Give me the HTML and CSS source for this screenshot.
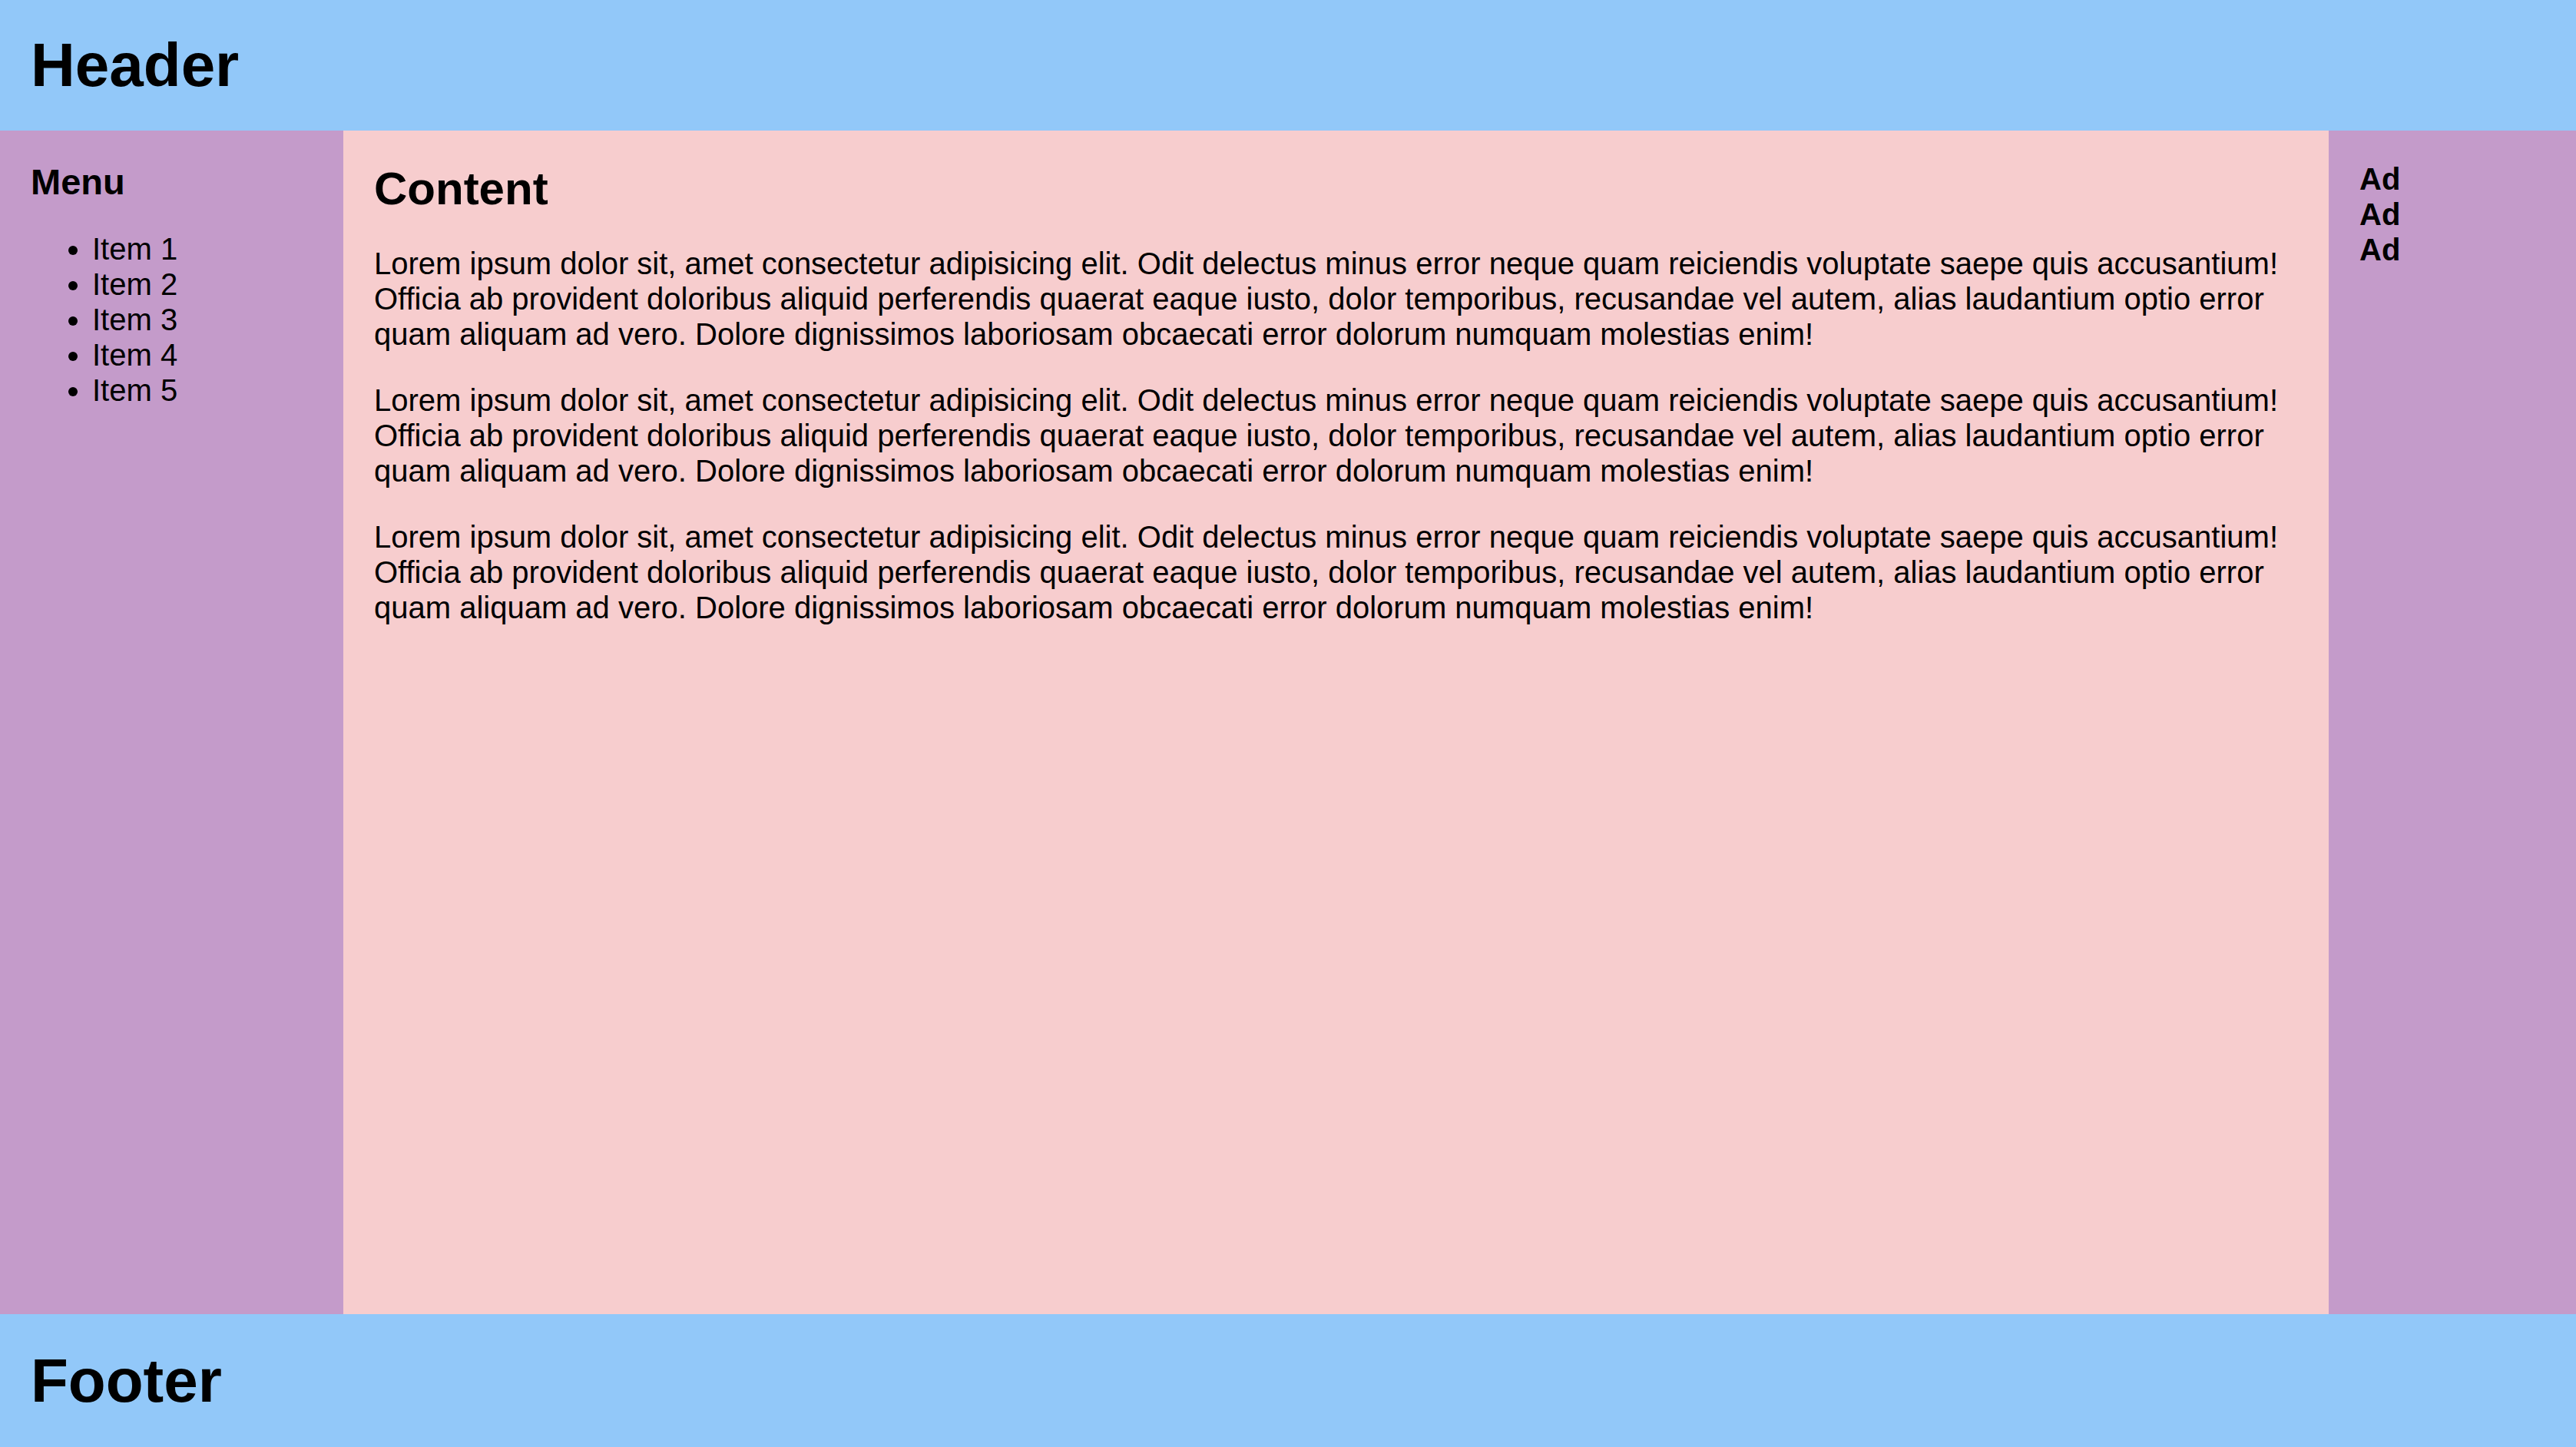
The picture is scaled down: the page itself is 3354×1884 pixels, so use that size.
FILE: index.html
```html
<!DOCTYPE html>
<html lang="en">
<head>
<meta charset="utf-8">
<title>Layout</title>
<link rel="stylesheet" href="styles.css">
</head>
<body>
<div class="page">
  <header class="header"><h1>Header</h1></header>
  <nav class="menu">
    <h3>Menu</h3>
    <ul>
      <li>Item 1</li>
      <li>Item 2</li>
      <li>Item 3</li>
      <li>Item 4</li>
      <li>Item 5</li>
    </ul>
  </nav>
  <main class="content">
    <h2>Content</h2>
    <p>Lorem ipsum dolor sit, amet consectetur adipisicing elit. Odit delectus minus error neque quam reiciendis voluptate saepe quis accusantium! Officia ab provident doloribus aliquid perferendis quaerat eaque iusto, dolor temporibus, recusandae vel autem, alias laudantium optio error quam aliquam ad vero. Dolore dignissimos laboriosam obcaecati error dolorum numquam molestias enim!</p>
    <p>Lorem ipsum dolor sit, amet consectetur adipisicing elit. Odit delectus minus error neque quam reiciendis voluptate saepe quis accusantium! Officia ab provident doloribus aliquid perferendis quaerat eaque iusto, dolor temporibus, recusandae vel autem, alias laudantium optio error quam aliquam ad vero. Dolore dignissimos laboriosam obcaecati error dolorum numquam molestias enim!</p>
    <p>Lorem ipsum dolor sit, amet consectetur adipisicing elit. Odit delectus minus error neque quam reiciendis voluptate saepe quis accusantium! Officia ab provident doloribus aliquid perferendis quaerat eaque iusto, dolor temporibus, recusandae vel autem, alias laudantium optio error quam aliquam ad vero. Dolore dignissimos laboriosam obcaecati error dolorum numquam molestias enim!</p>
  </main>
  <aside class="ads">
    <div class="ad">Ad</div>
    <div class="ad">Ad</div>
    <div class="ad">Ad</div>
  </aside>
  <footer class="footer"><h1>Footer</h1></footer>
</div>
</body>
</html>
```
FILE: styles.css
```css
html, body {
  margin: 0;
  padding: 0;
}

body {
  font-family: "Liberation Sans", Arial, Helvetica, sans-serif;
  font-size: 40px;
  line-height: 46px;
  color: #000;
}

.page {
  display: grid;
  grid-template-columns: 447px 1fr 322px;
  grid-template-rows: 170px 1fr 173px;
  grid-template-areas:
    "header header header"
    "menu content ads"
    "footer footer footer";
  height: 100vh;
}

.header, .footer {
  background: #92c8f9;
  padding: 39px 40px 0;
}

.header { grid-area: header; }
.footer { grid-area: footer; padding-top: 41px; }

.header h1, .footer h1 {
  margin: 0;
  font-size: 80px;
  line-height: 92px;
  font-weight: bold;
}

.menu {
  grid-area: menu;
  background: #c49bca;
  padding: 40px;
}

.menu h3 {
  margin: 0;
  font-size: 47px;
  line-height: 54px;
  font-weight: bold;
}

.menu ul {
  margin: 37px 0 0;
  padding-left: 80px;
}

.content {
  grid-area: content;
  background: #f7cdce;
  padding: 41px 40px;
}

.content h2 {
  margin: 0;
  font-size: 60px;
  line-height: 69px;
  font-weight: bold;
}

.content p {
  margin: 40px 0 0;
}

.ads {
  grid-area: ads;
  background: #c49bca;
  padding: 40px 40px;
}

.ad {
  font-weight: bold;
}
```
